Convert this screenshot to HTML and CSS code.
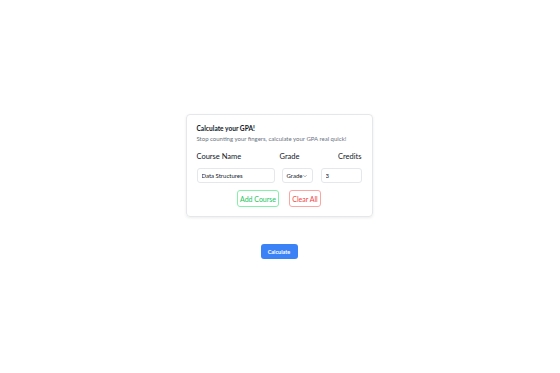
FILE: index.html
```html
<html>
<head>
<meta http-equiv="Content-Type" content="text/html;charset=UTF-8"><title>GPA Calculator</title>
<link rel="stylesheet" href="styles.css">
</head>
<body>
<div class="page">
  <div class="card">
    <div class="title">Calculate your GPA!</div>
    <div class="subtitle">Stop counting your fingers, calculate your GPA real quick!</div>

    <div class="row labels">
      <div class="col-course">Course Name</div>
      <div class="label-grade">Grade</div>
      <div class="label-credits">Credits</div>
    </div>

    <div class="row fields">
      <input class="field col-course" type="text" value="Data Structures">
      <div class="field col-grade select">Grade
        <svg width="5" height="4" viewBox="0 0 10 6"><path d="M1 1 L5 5 L9 1" fill="none" stroke="#555" stroke-width="1.2"/></svg>
      </div>
      <input class="field col-credits" type="text" value="3">
    </div>

    <div class="actions">
      <button class="btn add">Add Course</button>
      <button class="btn clear">Clear All</button>
    </div>
  </div>

  <button class="calc">Calculate</button>
</div>
</body>
</html>
```

FILE: styles.css
```css
body {
    margin: 0px;
    padding: 0px;
    background-color: #ffffff;
    font-family: Lato, "Open Sans", sans-serif;
    color: #111827;
}

.page {
    display: flex;
    flex-direction: column;
    align-items: center;
    padding-top: 114px;
    padding-left: 5px;
    padding-right: 7px;
}

.card {
    width: 165px;
    padding: 9px 10px 9px 10px;
    border: 1px solid #e5e7eb;
    border-radius: 4px;
    box-shadow: 0 1px 3px rgba(0,0,0,0.08);
}

.title {
    font-size: 6.6px;
    font-weight: bold;
    line-height: 9px;
}

.subtitle {
    margin-top: 2px;
    font-size: 6px;
    line-height: 8px;
    color: #6b7280;
}

.row {
    display: flex;
    align-items: center;
}

.labels {
    margin-top: 9px;
    font-size: 7.5px;
    line-height: 10px;
}
.label-grade { margin-left: 5px; }
.label-credits { flex: 1; text-align: right; }

.fields {
    margin-top: 6px;
}

.col-course { width: 78px; flex-shrink: 0; }
.col-grade { width: 31px; margin-left: 7px; flex-shrink: 0; }
.col-credits { width: 41px; margin-left: 8px; flex-shrink: 0; }

.field {
    box-sizing: border-box;
    height: 15px;
    border: 1px solid #e5e7eb;
    border-radius: 3px;
    font-family: Lato, sans-serif;
    font-size: 6px;
    color: #111827;
    padding: 0px 4px;
    background: #ffffff;
    outline: none;
}

.select {
    display: flex;
    align-items: center;
    gap: 1px;
}

.actions {
    display: flex;
    justify-content: center;
    gap: 10px;
    margin-top: 7px;
}

.btn {
    height: 17px;
    padding: 0px;
    white-space: nowrap;
    background: #ffffff;
    border-radius: 3px;
    font-family: Lato, sans-serif;
    font-size: 7px;
}
.add { width: 42px; border: 1px solid #86efac; color: #22c55e; }
.clear { width: 32px; border: 1px solid #fca5a5; color: #ef4444; }

.calc {
    margin-top: 27px;
    width: 37px;
    height: 15px;
    border: 0px;
    border-radius: 3px;
    background-color: #3b82f6;
    color: #ffffff;
    font-family: Lato, sans-serif;
    font-size: 5.5px;
    font-weight: bold;
    padding: 0px;
}
```
